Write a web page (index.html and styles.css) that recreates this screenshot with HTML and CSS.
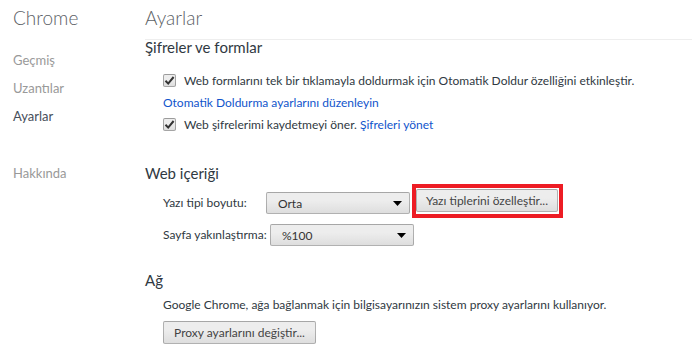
FILE: index.html
```html
<html lang="tr">
<head>
    <meta charset="UTF-8">
    <meta name="viewport" content="width=device-width, initial-scale=1.0">
    <title>Ayarlar</title>
    <link rel="stylesheet" href="styles.css">
</head>
<body>
    <div class="page">
        <div class="nav">
            <h1 class="nav-title">Chrome</h1>
            <ul class="nav-list">
                <li>Geçmiş</li>
                <li>Uzantılar</li>
                <li class="selected">Ayarlar</li>
                <li class="about">Hakkında</li>
            </ul>
        </div>
        <div class="main">
            <div class="main-header">
                <h1>Ayarlar</h1>
            </div>

            <div class="section">
                <h3>Şifreler ve formlar</h3>
                <div class="row">
                    <span class="checkbox"><svg width="11" height="11" viewBox="0 0 11 11"><path d="M1.5 5.8 L4.2 8.6 L9.6 2" fill="none" stroke="#333" stroke-width="2"/></svg></span>
                    Web formlarını tek bir tıklamayla doldurmak için Otomatik Doldur özelliğini etkinleştir.
                </div>
                <div class="row link-row">
                    <a href="#">Otomatik Doldurma ayarlarını düzenleyin</a>
                </div>
                <div class="row">
                    <span class="checkbox"><svg width="11" height="11" viewBox="0 0 11 11"><path d="M1.5 5.8 L4.2 8.6 L9.6 2" fill="none" stroke="#333" stroke-width="2"/></svg></span>
                    Web şifrelerimi kaydetmeyi öner.&nbsp;<a href="#">Şifreleri yönet</a>
                </div>
            </div>

            <div class="section web-content">
                <h3>Web içeriği</h3>
                <div class="field-row font-row">
                    <label class="label-font">Yazı tipi boyutu:</label>
                    <div class="select select-font">
                        <span>Orta</span>
                        <svg width="9" height="5" viewBox="0 0 9 5"><path d="M0 0 H9 L4.5 5 Z" fill="#000"/></svg>
                    </div>
                    <span class="highlight">
                        <button class="btn">Yazı tiplerini özelleştir...</button>
                    </span>
                </div>
                <div class="field-row zoom-row">
                    <label class="label-zoom">Sayfa yakınlaştırma:</label>
                    <div class="select select-zoom">
                        <span>%100</span>
                        <svg width="9" height="5" viewBox="0 0 9 5"><path d="M0 0 H9 L4.5 5 Z" fill="#000"/></svg>
                    </div>
                </div>
            </div>

            <div class="section network">
                <h3>Ağ</h3>
                <div class="text-row">Google Chrome, ağa bağlanmak için bilgisayarınızın sistem proxy ayarlarını kullanıyor.</div>
                <button class="btn proxy-btn">Proxy ayarlarını değiştir...</button>
            </div>
        </div>
    </div>
</body>
</html>
```

FILE: styles.css
```css
body {
    font-family: Lato, "Open Sans", sans-serif;
    font-size: 12px;
    color: #303942;
    margin: 0;
    padding: 0;
    background: #fff;
}
.page {
    display: flex;
}
.nav {
    width: 145px;
    flex-shrink: 0;
    padding-left: 13px;
    box-sizing: border-box;
}
.nav-title {
    margin: 0;
    padding-top: 8px;
    font-size: 19px;
    line-height: 20px;
    font-weight: 300;
    color: #5c6166;
}
.nav-list {
    list-style: none;
    margin: 18px 0 0;
    padding: 0;
    font-size: 13px;
}
.nav-list li {
    line-height: 28px;
    color: #999;
}
.nav-list .selected {
    color: #464e5a;
}
.nav-list .about {
    margin-top: 29px;
}
.main {
    flex: 1;
}
.main-header {
    height: 40px;
    box-sizing: border-box;
    padding-top: 8px;
    border-bottom: 1px solid #eee;
}
.main-header h1 {
    margin: 0;
    font-size: 19px;
    line-height: 20px;
    font-weight: 300;
    color: #5c6166;
}
.section h3 {
    margin: 0;
    font-size: 15px;
    line-height: 14px;
    font-weight: normal;
    color: #303942;
}
.row {
    display: flex;
    align-items: center;
    height: 22px;
    padding-left: 18px;
}
.row:first-of-type {
    margin-top: 15px;
}
.checkbox {
    width: 13px;
    height: 13px;
    box-sizing: border-box;
    border: 1px solid rgba(0, 0, 0, 0.3);
    border-radius: 2px;
    background: linear-gradient(#ededed, #ededed 38%, #dedede);
    margin-right: 8px;
    display: flex;
    align-items: center;
    justify-content: center;
}
a {
    color: #15c;
    text-decoration: none;
}
.web-content {
    margin-top: 31px;
}
.field-row {
    display: flex;
    align-items: flex-start;
    padding-left: 18px;
}
.field-row label {
    line-height: 22px;
}
.font-row {
    margin-top: 4px;
}
.font-row label,
.font-row .select {
    margin-top: 8px;
}
.zoom-row {
    margin-top: 6px;
}
.label-font {
    width: 103px;
}
.label-zoom {
    width: 107px;
}
.select {
    height: 22px;
    width: 144px;
    box-sizing: border-box;
    border: 1px solid rgba(0, 0, 0, 0.25);
    border-radius: 2px;
    background: linear-gradient(#ededed, #ededed 38%, #dedede);
    display: flex;
    align-items: center;
    justify-content: space-between;
    padding: 0 7px 0 11px;
    color: #333;
}
.btn {
    height: 23px;
    box-sizing: border-box;
    border: 1px solid rgba(0, 0, 0, 0.25);
    border-radius: 2px;
    background: linear-gradient(#ededed, #ededed 38%, #dedede);
    font-family: inherit;
    font-size: 12px;
    color: #444;
    padding: 0 8px;
    white-space: nowrap;
}
.highlight {
    display: flex;
    margin-left: 2px;
    padding: 1px 1px 2px 0;
    border: 4px solid #ed1c24;
}
.highlight .btn {
    width: 142px;
}
.network {
    margin-top: 27px;
}
.text-row {
    padding-left: 18px;
    line-height: 18px;
    margin-top: 9px;
}
.proxy-btn {
    margin: 7px 0 0 18px;
    width: 153px;
}
```
